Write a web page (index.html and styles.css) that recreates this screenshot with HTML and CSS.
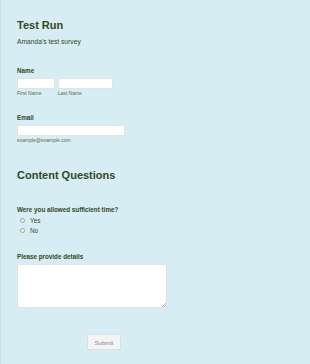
FILE: index.html
```html
<!DOCTYPE html>
<html lang="en">
<head>
    <meta charset="UTF-8">
    <meta name="viewport" content="width=device-width, initial-scale=1.0">
    <title>Test Run</title>
    <link rel="stylesheet" href="styles.css">
</head>
<body>
    <form class="survey">
        <div class="header">
            <h1 class="title">Test Run</h1>
            <p class="subtitle">Amanda's test survey</p>
        </div>

        <div class="field field-name">
            <label class="label">Name</label>
            <div class="name-row">
                <div class="name-part">
                    <input type="text" class="input input-first">
                    <span class="sublabel">First Name</span>
                </div>
                <div class="name-part">
                    <input type="text" class="input input-last">
                    <span class="sublabel">Last Name</span>
                </div>
            </div>
        </div>

        <div class="field field-email">
            <label class="label">Email</label>
            <input type="email" class="input input-email">
            <span class="sublabel">example@example.com</span>
        </div>

        <h2 class="section-title">Content Questions</h2>

        <div class="field field-time">
            <label class="label">Were you allowed sufficient time?</label>
            <div class="options">
                <label class="option"><input type="radio" name="time" class="radio"> Yes</label>
                <label class="option"><input type="radio" name="time" class="radio"> No</label>
            </div>
        </div>

        <div class="field field-details">
            <label class="label">Please provide details</label>
            <div class="details-wrap">
                <textarea class="details"></textarea>
            </div>
        </div>

        <div class="actions">
            <button type="button" class="submit">Submit</button>
        </div>
    </form>
</body>
</html>
```

FILE: styles.css
```css
/* page */
body {
    margin: 0;
    min-height: 364px;
    background: #d5edf3;
    border-left: 1px solid #c5e3ed;
    font-family: "Liberation Sans", Arial, sans-serif;
    color: #34471f;
}

.survey {
    width: 292px;
}

/* header */
.header {
    padding: 19px 16px 0;
    height: 37px;
    border-bottom: 1px solid #dbe9ef;
}

.title {
    margin: 0;
    font-size: 11px;
    line-height: 13px;
    font-weight: bold;
}

.subtitle {
    margin: 5.5px 0 0;
    font-size: 6.7px;
    line-height: 8px;
}

/* fields */
.field {
    padding: 0 16px;
}

.label {
    display: block;
    font-size: 6.3px;
    line-height: 8px;
    font-weight: bold;
}

.sublabel {
    display: block;
    margin-top: 1.3px;
    font-size: 5px;
    line-height: 6px;
    color: #5d6e48;
}

.input {
    display: block;
    box-sizing: border-box;
    height: 11px;
    margin: 3px 0 0;
    padding: 0 2px;
    border: 1px solid #e2e4e2;
    background: #fff;
    outline: none;
}

.field-name {
    margin-top: 10px;
}

.name-row {
    display: flex;
    gap: 2.7px;
}

.input-first { width: 38px; }
.input-last { width: 55.3px; }

.field-email {
    margin-top: 17.7px;
}

.input-email {
    width: 108px;
}

.field-email .sublabel {
    margin-top: 1px;
}

/* section */
.section-title {
    margin: 25.7px 16px 0;
    font-size: 11px;
    line-height: 13px;
    font-weight: bold;
}

.field-time {
    margin-top: 24.3px;
}

.options {
    margin-top: 1.7px;
    padding-left: 3px;
}

.option {
    display: flex;
    align-items: center;
    gap: 5px;
    height: 10px;
    font-size: 6.4px;
    line-height: 10px;
    color: #3d5027;
}

.radio {
    appearance: none;
    box-sizing: border-box;
    width: 5px;
    height: 5px;
    margin: 0;
    border: 1px solid #9a9e9a;
    border-radius: 50%;
    background: #fff;
}

.field-details {
    margin-top: 17.3px;
}

.details-wrap {
    position: relative;
    width: 150px;
    margin-top: 3px;
}

.details {
    display: block;
    box-sizing: border-box;
    width: 150px;
    height: 44px;
    border: 1px solid #e0e2e0;
    background: #fff;
    outline: none;
    resize: none;
}

/* small resize grip in the corner */
.details-wrap::after {
    content: '';
    position: absolute;
    right: 1px;
    bottom: 1px;
    width: 4px;
    height: 4px;
    background: linear-gradient(135deg, transparent 45%, #b5b5b5 45%, #b5b5b5 55%, transparent 55%, transparent 75%, #b5b5b5 75%, #b5b5b5 85%, transparent 85%);
}

/* submit */
.actions {
    margin-top: 23px;
    padding-left: 86px;
}

.submit {
    box-sizing: border-box;
    width: 34px;
    height: 16px;
    padding: 0;
    border: 1px solid #dedede;
    border-radius: 1px;
    background: #f4f4f4;
    font-family: "Liberation Sans", Arial, sans-serif;
    font-size: 6.1px;
    color: #888;
}
```
